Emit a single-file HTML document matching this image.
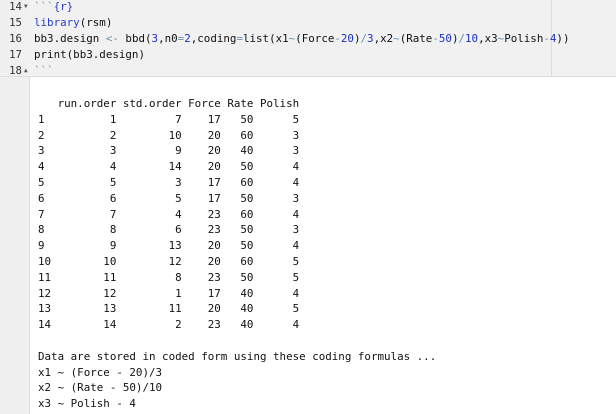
<!DOCTYPE html>
<html><head><style>
*{margin:0;padding:0}
html,body{width:616px;height:414px;overflow:hidden;background:#fff}
body{font-family:"DejaVu Sans Mono","Liberation Mono",monospace;font-size:10.85px;color:#111}
.top{display:flex;height:76px;background:#f1f1f1;border-bottom:1px solid #ddd}
.g{width:29px;background:#f0f0f0;flex:none}
.ln{height:16px;line-height:16px;text-align:right;width:22px;color:#333;position:relative;font-size:10.7px}
.ln i{position:absolute;left:24px;top:0;font-size:6px;font-style:normal;color:#555}
.c{flex:none;width:517px;padding-left:5px;border-right:1px solid #ddd;overflow:visible}
.c p{height:16px;line-height:16px;white-space:nowrap}
.b{color:#1a2fbf}.o{color:#6a8fb0}.k{color:#2840c0}
.bot{display:flex;height:337px}
.g2{width:29px;background:#f0f0f0;flex:none;border-right:1px solid #ddd}
.out{padding:19px 0 0 8px;line-height:15.8px;white-space:nowrap}
.out p{height:15.8px}
</style></head><body>
<div class="top">
<div class="g">
<div class="ln" style="margin-top:-1px">14<i>▼</i></div>
<div class="ln">15</div>
<div class="ln">16</div>
<div class="ln">17</div>
<div class="ln">18<i>▲</i></div>
</div>
<div class="c" style="margin-top:-1px">
<p><span class="o">&#96;&#96;&#96;</span><span class="k">{r}</span></p>
<p><span class="k">library</span>(rsm)</p>
<p>bb3.design <span class="o">&lt;-</span> bbd(<span class="b">3</span>,n0<span class="o">=</span><span class="b">2</span>,coding<span class="o">=</span>list(x1<span class="o">~</span>(Force<span class="o">-</span><span class="b">20</span>)<span class="o">/</span><span class="b">3</span>,x2<span class="o">~</span>(Rate<span class="o">-</span><span class="b">50</span>)<span class="o">/</span><span class="b">10</span>,x3<span class="o">~</span>Polish<span class="o">-</span><span class="b">4</span>))</p>
<p>print(bb3.design)</p>
<p><span class="o">&#96;&#96;&#96;</span></p>
</div>
</div>
<div class="bot">
<div class="g2"></div>
<div class="out">
<p>&nbsp;&nbsp;&nbsp;run.order&nbsp;std.order&nbsp;Force&nbsp;Rate&nbsp;Polish</p>
<p>1&nbsp;&nbsp;&nbsp;&nbsp;&nbsp;&nbsp;&nbsp;&nbsp;&nbsp;&nbsp;1&nbsp;&nbsp;&nbsp;&nbsp;&nbsp;&nbsp;&nbsp;&nbsp;&nbsp;7&nbsp;&nbsp;&nbsp;&nbsp;17&nbsp;&nbsp;&nbsp;50&nbsp;&nbsp;&nbsp;&nbsp;&nbsp;&nbsp;5</p>
<p>2&nbsp;&nbsp;&nbsp;&nbsp;&nbsp;&nbsp;&nbsp;&nbsp;&nbsp;&nbsp;2&nbsp;&nbsp;&nbsp;&nbsp;&nbsp;&nbsp;&nbsp;&nbsp;10&nbsp;&nbsp;&nbsp;&nbsp;20&nbsp;&nbsp;&nbsp;60&nbsp;&nbsp;&nbsp;&nbsp;&nbsp;&nbsp;3</p>
<p>3&nbsp;&nbsp;&nbsp;&nbsp;&nbsp;&nbsp;&nbsp;&nbsp;&nbsp;&nbsp;3&nbsp;&nbsp;&nbsp;&nbsp;&nbsp;&nbsp;&nbsp;&nbsp;&nbsp;9&nbsp;&nbsp;&nbsp;&nbsp;20&nbsp;&nbsp;&nbsp;40&nbsp;&nbsp;&nbsp;&nbsp;&nbsp;&nbsp;3</p>
<p>4&nbsp;&nbsp;&nbsp;&nbsp;&nbsp;&nbsp;&nbsp;&nbsp;&nbsp;&nbsp;4&nbsp;&nbsp;&nbsp;&nbsp;&nbsp;&nbsp;&nbsp;&nbsp;14&nbsp;&nbsp;&nbsp;&nbsp;20&nbsp;&nbsp;&nbsp;50&nbsp;&nbsp;&nbsp;&nbsp;&nbsp;&nbsp;4</p>
<p>5&nbsp;&nbsp;&nbsp;&nbsp;&nbsp;&nbsp;&nbsp;&nbsp;&nbsp;&nbsp;5&nbsp;&nbsp;&nbsp;&nbsp;&nbsp;&nbsp;&nbsp;&nbsp;&nbsp;3&nbsp;&nbsp;&nbsp;&nbsp;17&nbsp;&nbsp;&nbsp;60&nbsp;&nbsp;&nbsp;&nbsp;&nbsp;&nbsp;4</p>
<p>6&nbsp;&nbsp;&nbsp;&nbsp;&nbsp;&nbsp;&nbsp;&nbsp;&nbsp;&nbsp;6&nbsp;&nbsp;&nbsp;&nbsp;&nbsp;&nbsp;&nbsp;&nbsp;&nbsp;5&nbsp;&nbsp;&nbsp;&nbsp;17&nbsp;&nbsp;&nbsp;50&nbsp;&nbsp;&nbsp;&nbsp;&nbsp;&nbsp;3</p>
<p>7&nbsp;&nbsp;&nbsp;&nbsp;&nbsp;&nbsp;&nbsp;&nbsp;&nbsp;&nbsp;7&nbsp;&nbsp;&nbsp;&nbsp;&nbsp;&nbsp;&nbsp;&nbsp;&nbsp;4&nbsp;&nbsp;&nbsp;&nbsp;23&nbsp;&nbsp;&nbsp;60&nbsp;&nbsp;&nbsp;&nbsp;&nbsp;&nbsp;4</p>
<p>8&nbsp;&nbsp;&nbsp;&nbsp;&nbsp;&nbsp;&nbsp;&nbsp;&nbsp;&nbsp;8&nbsp;&nbsp;&nbsp;&nbsp;&nbsp;&nbsp;&nbsp;&nbsp;&nbsp;6&nbsp;&nbsp;&nbsp;&nbsp;23&nbsp;&nbsp;&nbsp;50&nbsp;&nbsp;&nbsp;&nbsp;&nbsp;&nbsp;3</p>
<p>9&nbsp;&nbsp;&nbsp;&nbsp;&nbsp;&nbsp;&nbsp;&nbsp;&nbsp;&nbsp;9&nbsp;&nbsp;&nbsp;&nbsp;&nbsp;&nbsp;&nbsp;&nbsp;13&nbsp;&nbsp;&nbsp;&nbsp;20&nbsp;&nbsp;&nbsp;50&nbsp;&nbsp;&nbsp;&nbsp;&nbsp;&nbsp;4</p>
<p>10&nbsp;&nbsp;&nbsp;&nbsp;&nbsp;&nbsp;&nbsp;&nbsp;10&nbsp;&nbsp;&nbsp;&nbsp;&nbsp;&nbsp;&nbsp;&nbsp;12&nbsp;&nbsp;&nbsp;&nbsp;20&nbsp;&nbsp;&nbsp;60&nbsp;&nbsp;&nbsp;&nbsp;&nbsp;&nbsp;5</p>
<p>11&nbsp;&nbsp;&nbsp;&nbsp;&nbsp;&nbsp;&nbsp;&nbsp;11&nbsp;&nbsp;&nbsp;&nbsp;&nbsp;&nbsp;&nbsp;&nbsp;&nbsp;8&nbsp;&nbsp;&nbsp;&nbsp;23&nbsp;&nbsp;&nbsp;50&nbsp;&nbsp;&nbsp;&nbsp;&nbsp;&nbsp;5</p>
<p>12&nbsp;&nbsp;&nbsp;&nbsp;&nbsp;&nbsp;&nbsp;&nbsp;12&nbsp;&nbsp;&nbsp;&nbsp;&nbsp;&nbsp;&nbsp;&nbsp;&nbsp;1&nbsp;&nbsp;&nbsp;&nbsp;17&nbsp;&nbsp;&nbsp;40&nbsp;&nbsp;&nbsp;&nbsp;&nbsp;&nbsp;4</p>
<p>13&nbsp;&nbsp;&nbsp;&nbsp;&nbsp;&nbsp;&nbsp;&nbsp;13&nbsp;&nbsp;&nbsp;&nbsp;&nbsp;&nbsp;&nbsp;&nbsp;11&nbsp;&nbsp;&nbsp;&nbsp;20&nbsp;&nbsp;&nbsp;40&nbsp;&nbsp;&nbsp;&nbsp;&nbsp;&nbsp;5</p>
<p>14&nbsp;&nbsp;&nbsp;&nbsp;&nbsp;&nbsp;&nbsp;&nbsp;14&nbsp;&nbsp;&nbsp;&nbsp;&nbsp;&nbsp;&nbsp;&nbsp;&nbsp;2&nbsp;&nbsp;&nbsp;&nbsp;23&nbsp;&nbsp;&nbsp;40&nbsp;&nbsp;&nbsp;&nbsp;&nbsp;&nbsp;4</p>
<p>&nbsp;</p>
<p>Data are stored in coded form using these coding formulas ...</p>
<p>x1 ~ (Force - 20)/3</p>
<p>x2 ~ (Rate - 50)/10</p>
<p>x3 ~ Polish - 4</p>
</div>
</div>
</body></html>
